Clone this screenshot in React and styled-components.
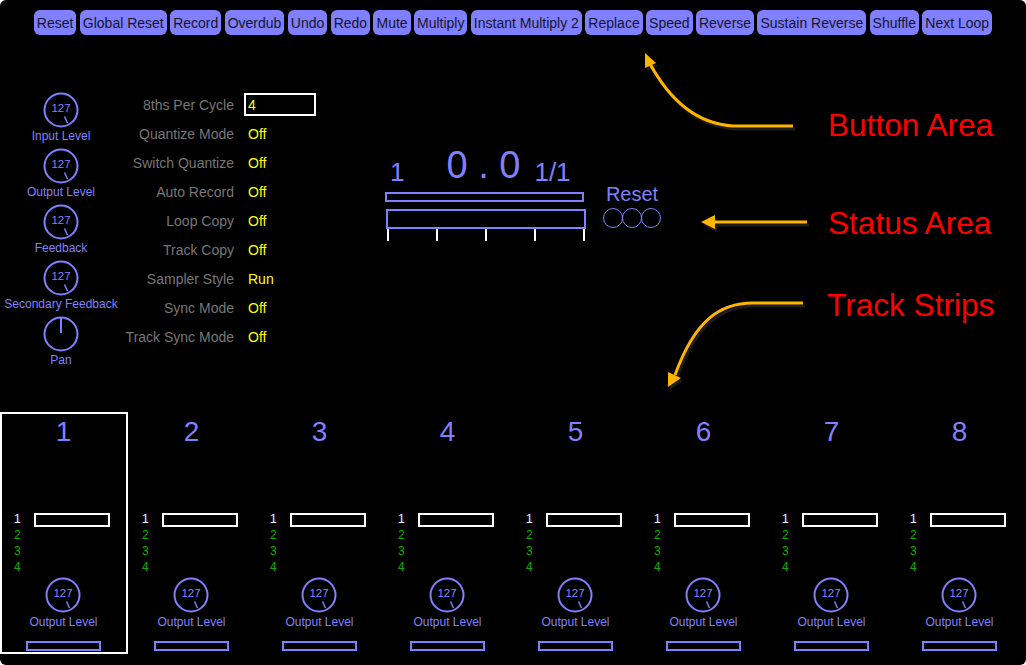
import React from "react";
import styled, { createGlobalStyle } from "styled-components";

const GlobalStyle = createGlobalStyle`
  html, body { margin: 0; padding: 0; background: #ffffff; }
  #root { width: 1026px; height: 665px; }
  * { box-sizing: border-box; }
`;

const BLUE = "#8080ff";

const Screen = styled.div`
  position: relative;
  width: 1026px;
  height: 665px;
  background: #000;
  border-radius: 6px;
  overflow: hidden;
  font-family: "Liberation Sans", Arial, sans-serif;
`;

const Toolbar = styled.div`
  display: flex;
  justify-content: center;
  gap: 3.4px;
  padding-top: 10px;
  height: 35px;
`;

const ActionButton = styled.div`
  height: 25px;
  padding: 0 3px;
  display: flex;
  align-items: center;
  background: ${BLUE};
  border-radius: 6px;
  color: #15152a;
  font-size: 14px;
  white-space: nowrap;
`;

const Middle = styled.div`
  display: flex;
  height: 377px;
`;

const KnobColumn = styled.div`
  width: 122px;
  padding-top: 57px;
  display: flex;
  flex-direction: column;
  align-items: center;
  gap: 5px;
`;

const KnobBlock = styled.div`
  display: flex;
  flex-direction: column;
  align-items: center;
  gap: 1px;
`;

const KnobLabel = styled.div`
  color: ${BLUE};
  font-size: 12px;
  line-height: 14px;
  white-space: nowrap;
`;

const ParamGrid = styled.div`
  display: grid;
  grid-template-columns: 112px 72px;
  grid-auto-rows: 29px;
  column-gap: 10px;
  align-items: center;
  padding-top: 55px;
  font-size: 14px;
`;

const ParamLabel = styled.div`
  color: #777777;
  text-align: right;
  white-space: nowrap;
`;

const ParamValue = styled.div`
  color: #ffff00;
  padding-left: 4px;
`;

const ParamInput = styled.div`
  height: 23px;
  border: 2px solid #ffffff;
  color: #ffff00;
  padding-left: 2px;
  display: flex;
  align-items: center;
`;

const Status = styled.div`
  display: flex;
  margin-left: 70px;
  padding-top: 111px;
`;

const StatusMain = styled.div`
  display: flex;
  flex-direction: column;
  width: 200px;
`;

const CounterRow = styled.div`
  display: flex;
  align-items: flex-end;
  height: 39px;
  padding-left: 4px;
  color: ${BLUE};
`;

const SmallCount = styled.div`
  font-size: 26px;
  line-height: 26px;
  margin-right: ${(p) => p.$gap || 0}px;
`;

const BigCount = styled.div`
  font-size: 38px;
  line-height: 38px;
  margin-bottom: 1px;
  margin-right: 14px;
  white-space: pre;
`;

const Bar = styled.div`
  border: 2px solid ${BLUE};
  height: ${(p) => p.$h}px;
  width: ${(p) => p.$w}px;
  margin-left: ${(p) => p.$ml || 0}px;
  margin-top: 7px;
`;

const Ticks = styled.div`
  display: flex;
  justify-content: space-between;
  width: 199px;
  padding-left: 1px;
`;

const Tick = styled.div`
  width: 2px;
  height: 12px;
  background: #ffffff;
`;

const StatusSide = styled.div`
  display: flex;
  flex-direction: column;
  align-items: center;
  padding-top: 38px;
  margin-left: 17px;
`;

const SideLabel = styled.div`
  color: ${BLUE};
  font-size: 20px;
  line-height: 20px;
  margin-bottom: 4px;
`;

const Lamps = styled.div`
  display: flex;
`;

const Lamp = styled.div`
  width: 20px;
  height: 20px;
  border: 1.5px solid ${BLUE};
  border-radius: 50%;
  & + & { margin-left: -1px; }
`;

const Strips = styled.div`
  display: flex;
`;

const Strip = styled.div`
  width: 128px;
  height: 242px;
  border: 2px solid ${(p) => (p.$selected ? "#ffffff" : "transparent")};
  display: flex;
  flex-direction: column;
  align-items: center;
  padding-top: 2px;
`;

const StripNumber = styled.div`
  color: ${BLUE};
  font-size: 28px;
  line-height: 32px;
  margin-left: -1px;
`;

const LoopList = styled.div`
  align-self: stretch;
  display: grid;
  grid-template-columns: 20px 76px;
  grid-auto-rows: 16px;
  padding-left: 12px;
  margin-top: 63px;
  font-size: 12px;
  line-height: 16px;
`;

const LoopNum = styled.div`
  color: ${(p) => (p.$active ? "#ffffff" : "#00b000")};
`;

const LoopBar = styled.div`
  height: 14px;
  border: 2px solid #ffffff;
  align-self: center;
  margin-top: 2px;
`;

const StripKnob = styled.div`
  margin-top: 2px;
  display: flex;
  flex-direction: column;
  align-items: center;
  gap: 2px;
  margin-left: -1px;
`;

const StripFader = styled.div`
  width: 75px;
  height: 10px;
  border: 2px solid ${BLUE};
  margin-top: 12px;
  margin-left: -1px;
`;

const Overlay = styled.div`
  position: absolute;
  inset: 0;
  pointer-events: none;
`;

const Callout = styled.div`
  position: absolute;
  left: ${(p) => p.$x}px;
  top: ${(p) => p.$y}px;
  color: #ff0000;
  font-size: 31.6px;
  line-height: 31px;
  white-space: nowrap;
`;

function Knob({ value, pan }) {
  return (
    <svg width="36" height="36" viewBox="0 0 36 36">
      <circle cx="18" cy="18" r="16.5" fill="none" stroke={BLUE} strokeWidth="2" />
      {pan ? (
        <line x1="18" y1="2" x2="18" y2="17" stroke={BLUE} strokeWidth="2" />
      ) : (
        <>
          <text
            x="18"
            y="20"
            textAnchor="middle"
            fontFamily="Liberation Sans, Arial, sans-serif"
            fontSize="11.5"
            fill={BLUE}
          >
            {value}
          </text>
          <line x1="21.5" y1="24.5" x2="24.5" y2="31" stroke={BLUE} strokeWidth="1.5" />
        </>
      )}
    </svg>
  );
}

const buttons = [
  "Reset", "Global Reset", "Record", "Overdub", "Undo", "Redo", "Mute", "Multiply",
  "Instant Multiply 2", "Replace", "Speed", "Reverse", "Sustain Reverse", "Shuffle", "Next Loop",
];

const knobs = [
  { label: "Input Level", value: 127 },
  { label: "Output Level", value: 127 },
  { label: "Feedback", value: 127 },
  { label: "Secondary Feedback", value: 127 },
  { label: "Pan", pan: true },
];

const params = [
  ["8ths Per Cycle", "4", true],
  ["Quantize Mode", "Off"],
  ["Switch Quantize", "Off"],
  ["Auto Record", "Off"],
  ["Loop Copy", "Off"],
  ["Track Copy", "Off"],
  ["Sampler Style", "Run"],
  ["Sync Mode", "Off"],
  ["Track Sync Mode", "Off"],
];

function Arrows() {
  const orange = "#ffb400";
  const shadow = "#1c1c1c";
  const a1 = "M793 126 L733 126 C700 124 672 105 649 62";
  const a2 = "M807 222 L714 222";
  const a3 = "M803 303 L753 303 C720 303 695 320 675 375";
  return (
    <svg width="1026" height="665" style={{ position: "absolute", left: 0, top: 0 }}>
      <g transform="translate(2 3)">
        <path d={a1} fill="none" stroke={shadow} strokeWidth="3" />
        <path d={a2} fill="none" stroke={shadow} strokeWidth="3" />
        <path d={a3} fill="none" stroke={shadow} strokeWidth="3" />
        <polygon points="645,53 656,63 645,68" fill={shadow} />
        <polygon points="701,222 715,215 715,229" fill={shadow} />
        <polygon points="668,387 668,372 681,378" fill={shadow} />
      </g>
      <path d={a1} fill="none" stroke={orange} strokeWidth="3" />
      <path d={a2} fill="none" stroke={orange} strokeWidth="3" />
      <path d={a3} fill="none" stroke={orange} strokeWidth="3" />
      <polygon points="645,53 656,63 645,68" fill={orange} />
      <polygon points="701,222 715,215 715,229" fill={orange} />
      <polygon points="668,387 668,372 681,378" fill={orange} />
    </svg>
  );
}

export default function App() {
  return (
    <Screen>
      <GlobalStyle />
      <Toolbar>
        {buttons.map((b) => (
          <ActionButton key={b}>{b}</ActionButton>
        ))}
      </Toolbar>

      <Middle>
        <KnobColumn>
          {knobs.map((k) => (
            <KnobBlock key={k.label}>
              <Knob value={k.value} pan={k.pan} />
              <KnobLabel>{k.label}</KnobLabel>
            </KnobBlock>
          ))}
        </KnobColumn>

        <ParamGrid>
          {params.map(([label, value, input]) => (
            <React.Fragment key={label}>
              <ParamLabel>{label}</ParamLabel>
              {input ? <ParamInput>{value}</ParamInput> : <ParamValue>{value}</ParamValue>}
            </React.Fragment>
          ))}
        </ParamGrid>

        <Status>
          <StatusMain>
            <CounterRow>
              <SmallCount $gap={42}>1</SmallCount>
              <BigCount>{"0 . 0"}</BigCount>
              <SmallCount>1/1</SmallCount>
            </CounterRow>
            <Bar $w={199} $h={10} $ml={-1} />
            <Bar $w={200} $h={20} />
            <Ticks>
              {[0, 1, 2, 3, 4].map((i) => (
                <Tick key={i} />
              ))}
            </Ticks>
          </StatusMain>
          <StatusSide>
            <SideLabel>Reset</SideLabel>
            <Lamps>
              <Lamp />
              <Lamp />
              <Lamp />
            </Lamps>
          </StatusSide>
        </Status>
      </Middle>

      <Strips>
        {[1, 2, 3, 4, 5, 6, 7, 8].map((n) => (
          <Strip key={n} $selected={n === 1}>
            <StripNumber>{n}</StripNumber>
            <LoopList>
              <LoopNum $active>1</LoopNum>
              <LoopBar />
              <LoopNum>2</LoopNum>
              <span />
              <LoopNum>3</LoopNum>
              <span />
              <LoopNum>4</LoopNum>
              <span />
            </LoopList>
            <StripKnob>
              <Knob value={127} />
              <KnobLabel>Output Level</KnobLabel>
            </StripKnob>
            <StripFader />
          </Strip>
        ))}
      </Strips>

      <Overlay>
        <Arrows />
        <Callout $x={828} $y={110}>Button Area</Callout>
        <Callout $x={828} $y={208}>Status Area</Callout>
        <Callout $x={827} $y={290}>Track Strips</Callout>
      </Overlay>
    </Screen>
  );
}
